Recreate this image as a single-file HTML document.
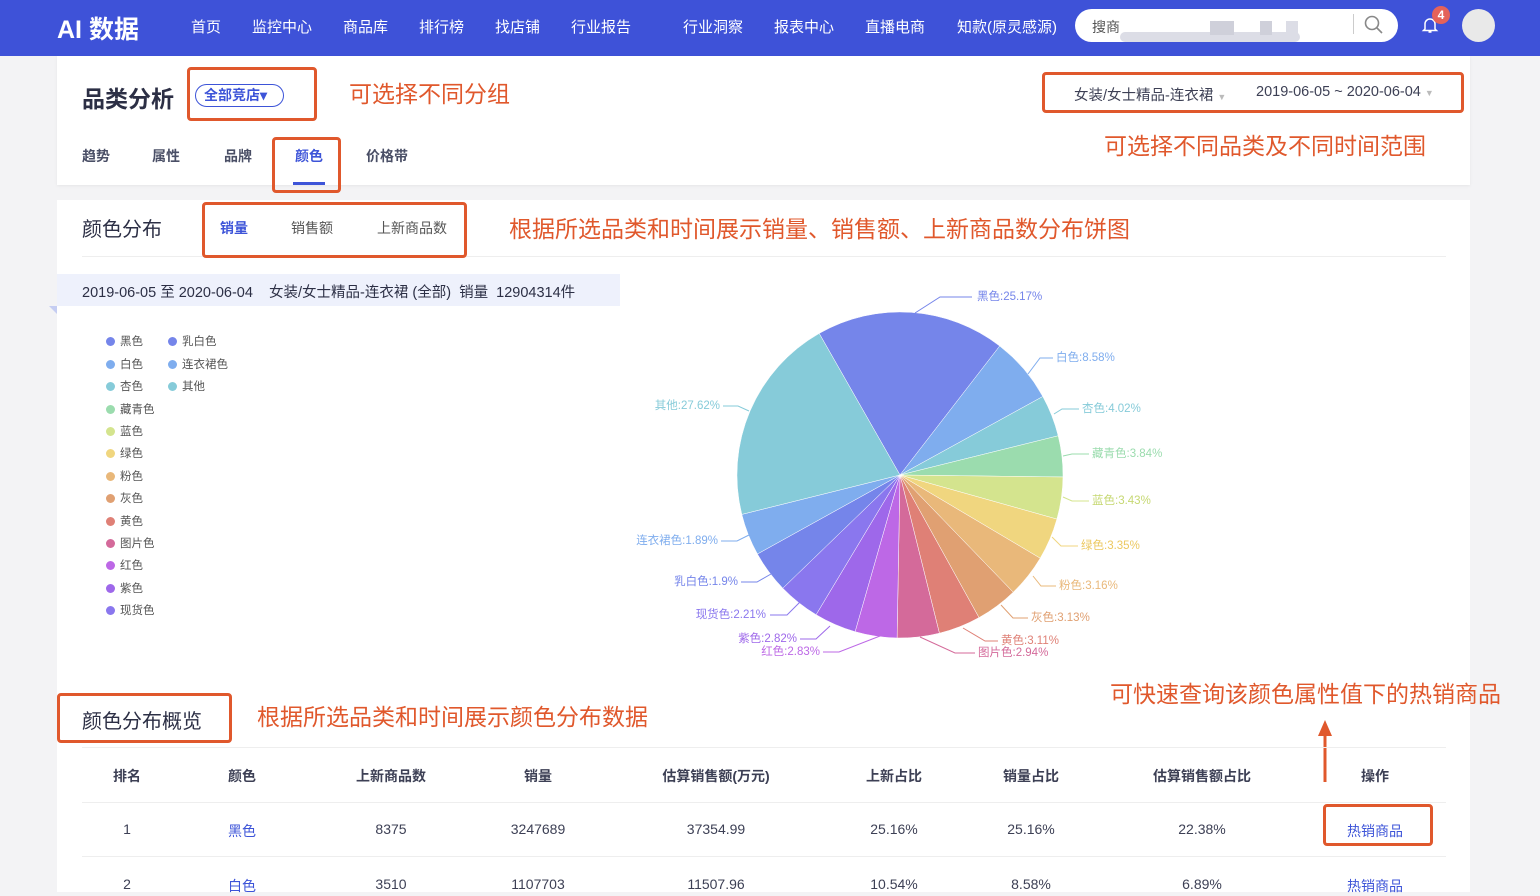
<!DOCTYPE html>
<html><head><meta charset="utf-8"><style>
*{margin:0;padding:0;box-sizing:border-box}
body{width:1540px;height:892px;overflow:hidden;background:#f3f3f5;font-family:"Liberation Sans","Noto Sans CJK SC",sans-serif;position:relative;color:#333}
.a{position:absolute}
.nav{left:0;top:0;width:1540px;height:56px;background:#3e52d8}
.nav .it{position:absolute;top:16px;color:#fff;font-size:15px}
.card{background:#fff}
.ob{position:absolute;border:3px solid #e0582c;border-radius:4px}
.ot{position:absolute;color:#e0582c;font-size:23px;white-space:nowrap}
.tab{position:absolute;font-size:14px;color:#4a4f66;font-weight:bold}
.lg{position:absolute;font-size:11.5px;color:#555}
.lg i{display:inline-block;width:9px;height:9px;border-radius:50%;margin-right:5px;vertical-align:-1px}
.th{position:absolute;font-size:14px;font-weight:bold;color:#3d4055;transform:translateX(-50%);white-space:nowrap}
.td{position:absolute;font-size:14px;color:#3d4055;transform:translateX(-50%);white-space:nowrap}
.bl{color:#3d54d8}
</style></head><body>
<div class="a nav">
<div class="a" style="left:57px;top:10px;color:#fff;font-size:25px;font-weight:bold">AI 数据</div>
<div class="it" style="left:191px">首页</div>
<div class="it" style="left:252px">监控中心</div>
<div class="it" style="left:343px">商品库</div>
<div class="it" style="left:419px">排行榜</div>
<div class="it" style="left:495px">找店铺</div>
<div class="it" style="left:571px">行业报告</div>
<div class="it" style="left:683px">行业洞察</div>
<div class="it" style="left:774px">报表中心</div>
<div class="it" style="left:865px">直播电商</div>
<div class="it" style="left:957px">知款(原灵感源)</div>
<div class="a" style="left:1075px;top:9px;width:323px;height:33px;background:#fff;border-radius:17px"></div>
<div class="a" style="left:1092px;top:17px;font-size:14px;color:#555">搜商</div>
<div class="a" style="left:1120px;top:32px;width:180px;height:10px;background:#dcdde6;border-radius:5px"></div>
<div class="a" style="left:1210px;top:21px;width:24px;height:14px;background:#cfd0da"></div>
<div class="a" style="left:1260px;top:21px;width:12px;height:14px;background:#cfd0da"></div>
<div class="a" style="left:1286px;top:21px;width:12px;height:14px;background:#dcdde6"></div>
<div class="a" style="left:1353px;top:14px;width:1px;height:20px;background:#ccc"></div>
<svg class="a" style="left:1363px;top:14px" width="22" height="22"><circle cx="9" cy="9" r="6.5" fill="none" stroke="#888" stroke-width="1.6"/><path d="M14 14l5 5" stroke="#888" stroke-width="1.6"/></svg>
<svg class="a" style="left:1421px;top:15px" width="18" height="20"><path d="M4 14V9a5 5 0 0110 0v5l1.5 1.5h-13z M7.5 17h3" fill="none" stroke="#fff" stroke-width="1.5"/></svg>
<div class="a" style="left:1432px;top:6px;width:18px;height:18px;border-radius:50%;background:#e4625a;color:#fff;font-size:12px;font-weight:bold;text-align:center;line-height:18px">4</div>
<div class="a" style="left:1462px;top:9px;width:33px;height:33px;border-radius:50%;background:#e9e9e9"></div>
</div>

<div class="a card" style="left:57px;top:56px;width:1413px;height:129px;box-shadow:0 1px 3px rgba(0,0,0,.06)"></div>
<div class="a" style="left:82px;top:80px;font-size:23px;font-weight:bold;color:#2c2f45">品类分析</div>
<div class="a" style="left:195px;top:84px;width:89px;height:23px;border:1.5px solid #3d54d8;border-radius:12px;color:#3d54d8;font-size:14px;font-weight:bold;line-height:20px;padding-left:8px">全部竞店▾</div>
<div class="ob" style="left:187px;top:67px;width:130px;height:54px"></div>
<div class="ot" style="left:349px;top:75px">可选择不同分组</div>
<div class="tab" style="left:82px;top:146px">趋势</div>
<div class="tab" style="left:152px;top:146px">属性</div>
<div class="tab" style="left:224px;top:146px">品牌</div>
<div class="tab" style="left:295px;top:146px;color:#3d54d8">颜色</div>
<div class="a" style="left:293px;top:182px;width:32px;height:3px;background:#3d54d8"></div>
<div class="tab" style="left:366px;top:146px">价格带</div>
<div class="ob" style="left:272px;top:137px;width:69px;height:56px"></div>
<div class="a" style="left:1074px;top:84px;font-size:14.5px;color:#3d4055">女装/女士精品-连衣裙 <span style="color:#bbb;font-size:9px">▼</span></div>
<div class="a" style="left:1256px;top:84px;font-size:14.5px;color:#3d4055">2019-06-05 ~ 2020-06-04 <span style="color:#bbb;font-size:9px">▼</span></div>
<div class="ob" style="left:1042px;top:72px;width:422px;height:41px"></div>
<div class="ot" style="left:1104px;top:127px">可选择不同品类及不同时间范围</div>

<div class="a card" style="left:57px;top:200px;width:1413px;height:692px"></div>
<div class="a" style="left:82px;top:213px;font-size:20px;color:#2c2f45">颜色分布</div>
<div class="a" style="left:82px;top:256px;width:1364px;height:1px;background:#eee"></div>
<div class="tab" style="left:220px;top:218px;color:#3d54d8">销量</div>
<div class="tab" style="left:291px;top:218px;font-weight:normal;color:#555">销售额</div>
<div class="tab" style="left:377px;top:218px;font-weight:normal;color:#555">上新商品数</div>
<div class="ob" style="left:202px;top:202px;width:265px;height:56px"></div>
<div class="ot" style="left:509px;top:210px">根据所选品类和时间展示销量、销售额、上新商品数分布饼图</div>
<div class="a" style="left:57px;top:274px;width:563px;height:32px;background:#eef1fc"></div>
<div class="a" style="left:49px;top:306px;width:0;height:0;border-left:8px solid transparent;border-top:8px solid #c5cdf2"></div>
<div class="a" style="left:82px;top:281px;font-size:14.5px;color:#2c2f45;white-space:pre">2019-06-05 至 2020-06-04    女装/女士精品-连衣裙 (全部)  销量  12904314件</div>

<div class="lg" style="left:106px;top:333px"><i style="background:#7585ea"></i>黑色</div>
<div class="lg" style="left:106px;top:356px"><i style="background:#7fadee"></i>白色</div>
<div class="lg" style="left:106px;top:378px"><i style="background:#86cbd9"></i>杏色</div>
<div class="lg" style="left:106px;top:401px"><i style="background:#9bdcae"></i>藏青色</div>
<div class="lg" style="left:106px;top:423px"><i style="background:#d4e48e"></i>蓝色</div>
<div class="lg" style="left:106px;top:445px"><i style="background:#f0d67f"></i>绿色</div>
<div class="lg" style="left:106px;top:468px"><i style="background:#e9b87a"></i>粉色</div>
<div class="lg" style="left:106px;top:490px"><i style="background:#e0a072"></i>灰色</div>
<div class="lg" style="left:106px;top:513px"><i style="background:#df8076"></i>黄色</div>
<div class="lg" style="left:106px;top:535px"><i style="background:#d46a9a"></i>图片色</div>
<div class="lg" style="left:106px;top:557px"><i style="background:#bd68e6"></i>红色</div>
<div class="lg" style="left:106px;top:580px"><i style="background:#9e68ea"></i>紫色</div>
<div class="lg" style="left:106px;top:602px"><i style="background:#8a77ee"></i>现货色</div>
<div class="lg" style="left:168px;top:333px"><i style="background:#7585ea"></i>乳白色</div>
<div class="lg" style="left:168px;top:356px"><i style="background:#7fadee"></i>连衣裙色</div>
<div class="lg" style="left:168px;top:378px"><i style="background:#86cbd9"></i>其他</div>

<svg class="a" style="left:0;top:0" width="1540" height="892">
<g stroke="#fff" stroke-width="0.5">
<path d="M900 475L819.2 333.4A163 163 0 0 1 999.7 346Z" fill="#7585ea"/>
<path d="M900 475L999.7 346A163 163 0 0 1 1042.8 396.5Z" fill="#7fadee"/>
<path d="M900 475L1042.8 396.5A163 163 0 0 1 1058.2 435.8Z" fill="#86cbd9"/>
<path d="M900 475L1058.2 435.8A163 163 0 0 1 1063 477Z" fill="#9bdcae"/>
<path d="M900 475L1063 477A163 163 0 0 1 1056.9 519.1Z" fill="#d4e48e"/>
<path d="M900 475L1056.9 519.1A163 163 0 0 1 1040.2 558.2Z" fill="#f0d67f"/>
<path d="M900 475L1040.2 558.2A163 163 0 0 1 1013.2 592.2Z" fill="#e9b87a"/>
<path d="M900 475L1013.2 592.2A163 163 0 0 1 979 617.6Z" fill="#e0a072"/>
<path d="M900 475L979 617.6A163 163 0 0 1 939.4 633.2Z" fill="#df8076"/>
<path d="M900 475L939.4 633.2A163 163 0 0 1 897.1 638Z" fill="#d46a9a"/>
<path d="M900 475L897.1 638A163 163 0 0 1 855.1 631.7Z" fill="#bd68e6"/>
<path d="M900 475L855.1 631.7A163 163 0 0 1 816.1 614.7Z" fill="#9e68ea"/>
<path d="M900 475L816.1 614.7A163 163 0 0 1 782.8 588.2Z" fill="#8a77ee"/>
<path d="M900 475L782.8 588.2A163 163 0 0 1 757.4 554Z" fill="#7585ea"/>
<path d="M900 475L757.4 554A163 163 0 0 1 741.8 514.4Z" fill="#7fadee"/>
<path d="M900 475L741.8 514.4A163 163 0 0 1 819.2 333.4Z" fill="#86cbd9"/>
</g>
<g fill="none" stroke-width="1">
<polyline points="915,313 940,297 972,297" stroke="#7585ea"/>
<polyline points="1028,374 1040,358 1053,358" stroke="#7fadee"/>
<polyline points="1054,414 1062,409 1079,409" stroke="#86cbd9"/>
<polyline points="1063,456 1072,454 1089,454" stroke="#9bdcae"/>
<polyline points="1063,497 1072,501 1089,501" stroke="#d4e48e"/>
<polyline points="1052,537 1061,546 1078,546" stroke="#f0d67f"/>
<polyline points="1033,576 1041,586 1056,586" stroke="#e9b87a"/>
<polyline points="1001,605 1013,618 1028,618" stroke="#e0a072"/>
<polyline points="963,628 985,641 998,641" stroke="#df8076"/>
<polyline points="920,637 955,653 975,653" stroke="#d46a9a"/>
<polyline points="723,406 738,406 749,411" stroke="#86cbd9"/>
<polyline points="721,541 737,541 749,535" stroke="#7fadee"/>
<polyline points="741,582 757,582 771,574" stroke="#7585ea"/>
<polyline points="770,615 787,615 800,602" stroke="#8a77ee"/>
<polyline points="800,639 816,639 830,626" stroke="#9e68ea"/>
<polyline points="823,652 839,652 880,636" stroke="#bd68e6"/>
</g>
<g font-family="Liberation Sans,Noto Sans CJK SC,sans-serif" font-size="11.5" dominant-baseline="middle">
<text x="977" y="297" fill="#7585ea">黑色:25.17%</text>
<text x="1056" y="358" fill="#7fadee">白色:8.58%</text>
<text x="1082" y="409" fill="#86cbd9">杏色:4.02%</text>
<text x="1092" y="454" fill="#9bdcae">藏青色:3.84%</text>
<text x="1092" y="501" fill="#c6d872">蓝色:3.43%</text>
<text x="1081" y="546" fill="#ecc860">绿色:3.35%</text>
<text x="1059" y="586" fill="#e9b87a">粉色:3.16%</text>
<text x="1031" y="618" fill="#e0a072">灰色:3.13%</text>
<text x="1001" y="641" fill="#df8076">黄色:3.11%</text>
<text x="978" y="653" fill="#d46a9a">图片色:2.94%</text>
<g text-anchor="end">
<text x="720" y="406" fill="#86cbd9">其他:27.62%</text>
<text x="718" y="541" fill="#7fadee">连衣裙色:1.89%</text>
<text x="738" y="582" fill="#7585ea">乳白色:1.9%</text>
<text x="766" y="615" fill="#8a77ee">现货色:2.21%</text>
<text x="797" y="639" fill="#9e68ea">紫色:2.82%</text>
<text x="820" y="652" fill="#bd68e6">红色:2.83%</text>
</g></g>
<path d="M1325 782V730" stroke="#e0582c" stroke-width="3"/>
<path d="M1318 736L1325 720L1332 736Z" fill="#e0582c"/>
</svg>

<div class="ot" style="left:1110px;top:675px">可快速查询该颜色属性值下的热销商品</div>
<div class="a" style="left:82px;top:705px;font-size:20px;color:#2c2f45">颜色分布概览</div>
<div class="ob" style="left:57px;top:693px;width:175px;height:50px"></div>
<div class="ot" style="left:257px;top:698px">根据所选品类和时间展示颜色分布数据</div>
<div class="a" style="left:82px;top:747px;width:1364px;height:1px;background:#eee"></div>
<div class="a" style="left:82px;top:802px;width:1364px;height:1px;background:#eee"></div>
<div class="a" style="left:82px;top:856px;width:1364px;height:1px;background:#eee"></div>
<div class="th" style="left:127px;top:766px">排名</div>
<div class="th" style="left:242px;top:766px">颜色</div>
<div class="th" style="left:391px;top:766px">上新商品数</div>
<div class="th" style="left:538px;top:766px">销量</div>
<div class="th" style="left:716px;top:766px">估算销售额(万元)</div>
<div class="th" style="left:894px;top:766px">上新占比</div>
<div class="th" style="left:1031px;top:766px">销量占比</div>
<div class="th" style="left:1202px;top:766px">估算销售额占比</div>
<div class="th" style="left:1375px;top:766px">操作</div>
<div class="td" style="left:127px;top:821px">1</div>
<div class="td bl" style="left:242px;top:821px">黑色</div>
<div class="td" style="left:391px;top:821px">8375</div>
<div class="td" style="left:538px;top:821px">3247689</div>
<div class="td" style="left:716px;top:821px">37354.99</div>
<div class="td" style="left:894px;top:821px">25.16%</div>
<div class="td" style="left:1031px;top:821px">25.16%</div>
<div class="td" style="left:1202px;top:821px">22.38%</div>
<div class="td bl" style="left:1375px;top:821px">热销商品</div>
<div class="ob" style="left:1323px;top:804px;width:110px;height:42px"></div>
<div class="td" style="left:127px;top:876px">2</div>
<div class="td bl" style="left:242px;top:876px">白色</div>
<div class="td" style="left:391px;top:876px">3510</div>
<div class="td" style="left:538px;top:876px">1107703</div>
<div class="td" style="left:716px;top:876px">11507.96</div>
<div class="td" style="left:894px;top:876px">10.54%</div>
<div class="td" style="left:1031px;top:876px">8.58%</div>
<div class="td" style="left:1202px;top:876px">6.89%</div>
<div class="td bl" style="left:1375px;top:876px">热销商品</div>
</body></html>
